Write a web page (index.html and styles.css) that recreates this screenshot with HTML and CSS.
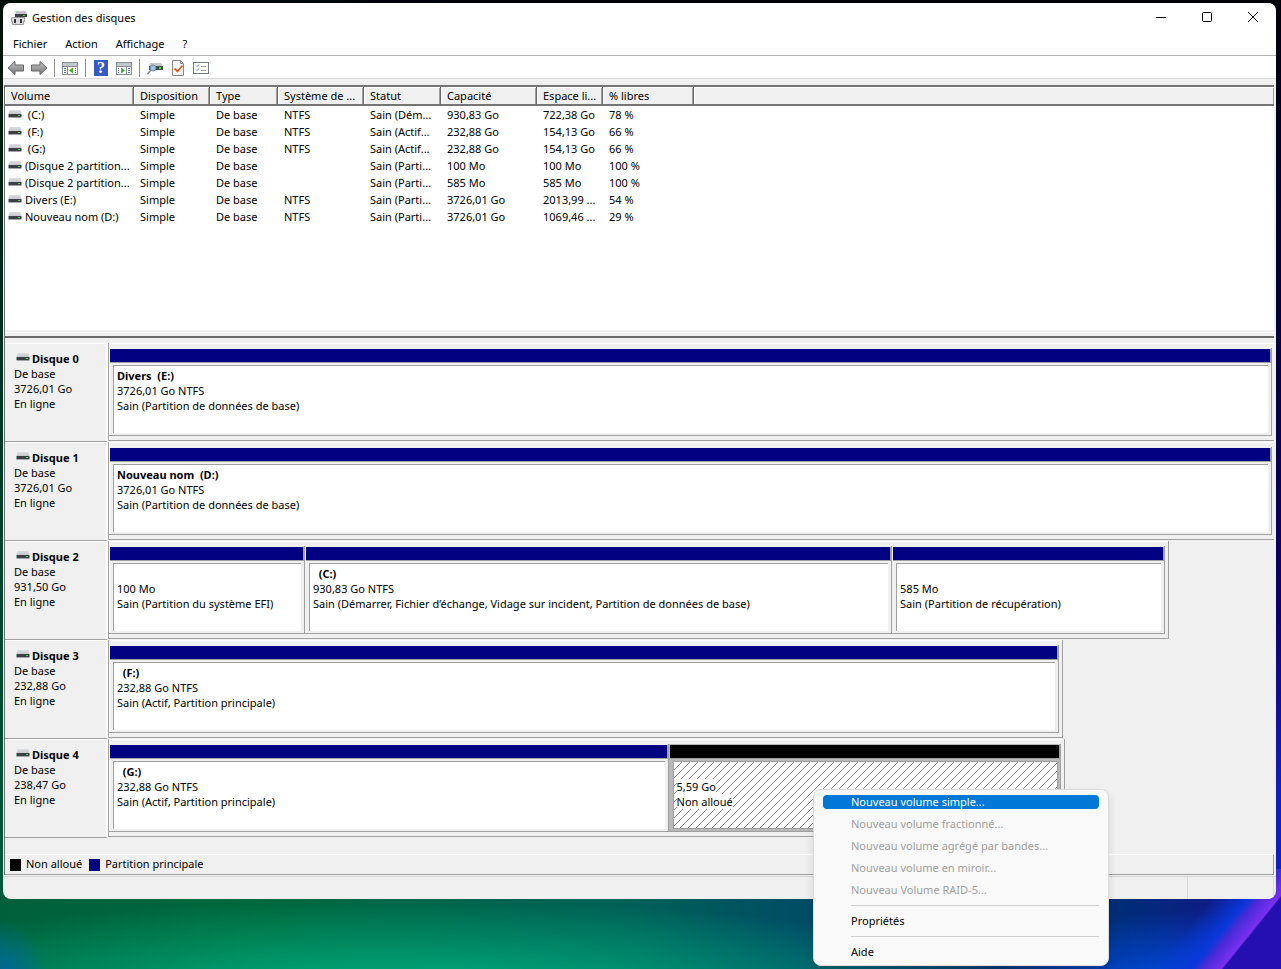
FILE: index.html
```
<!DOCTYPE html>
<html lang="fr">
<head>
  <meta charset="UTF-8" />
  <meta name="viewport" content="width=device-width, initial-scale=1.0" />
  <title>Gestion des disques</title>
  <link rel="stylesheet" href="styles.css">
</head>
<body>
  <svg class="sprite" aria-hidden="true">
    <defs>
      <linearGradient id="driveTop" x1="0" y1="0" x2="0" y2="1">
        <stop offset="0" stop-color="#dcdfe1" />
        <stop offset="1" stop-color="#c3c7ca" />
      </linearGradient>
      <linearGradient id="arrowFill" x1="0" y1="0" x2="0" y2="1">
        <stop offset="0" stop-color="#c4c4c4" />
        <stop offset="1" stop-color="#777" />
      </linearGradient>
      <symbol id="drive" viewBox="0 0 14 9">
        <path d="M1.500 0h11l1 4h-13z" fill="url(#driveTop)" />
        <rect x="0.500" y="4" width="13" height="3" fill="#3c4045" />
        <rect x="0.500" y="7" width="13" height="1" fill="#a4a8ac" />
        <rect x="10" y="5" width="2" height="1" fill="#3ee04a" />
      </symbol>
    </defs>
  </svg>

  <div class="window">
    <header class="titlebar">
      <svg class="app-icon" viewBox="0 0 16 16">
        <path d="M5 1h10l1 3H4z" fill="#c3c6c9" />
        <rect x="4" y="4" width="12" height="3" fill="#3c4045" />
        <rect x="12" y="5" width="2" height="1" fill="#3ee04a" />
        <path d="M0.500 7.500h13v4h-1v3h-11v-3h-1z" fill="#dcdcdc" stroke="#9a9a9a" />
        <path d="M3 9h2v4H3zM9 9h2v4H9z" fill="#333" />
      </svg>
      <h1>Gestion des disques</h1>
      <div class="win-buttons">
        <button type="button" aria-label="Réduire"><svg viewBox="0 0 12 12"><path d="M1 6.500h10" /></svg></button>
        <button type="button" aria-label="Agrandir"><svg viewBox="0 0 12 12"><rect x="1.500" y="1.500" width="9" height="9" rx="1" /></svg></button>
        <button type="button" aria-label="Fermer"><svg viewBox="0 0 12 12"><path d="M1 1l10 10M11 1L1 11" /></svg></button>
      </div>
    </header>

    <nav class="menubar">
      <button type="button">Fichier</button>
      <button type="button">Action</button>
      <button type="button">Affichage</button>
      <button type="button">?</button>
    </nav>

    <div class="toolbar">
      <button type="button" aria-label="Précédent"><svg viewBox="0 0 18 16"><path d="M1 8l7-6.500V5h8.500v6H8v3.500z" fill="url(#arrowFill)" stroke="#666" /></svg></button>
      <button type="button" aria-label="Suivant"><svg viewBox="0 0 18 16"><path d="M17 8l-7-6.500V5H1.500v6H10v3.500z" fill="url(#arrowFill)" stroke="#666" /></svg></button>
      <span class="sep"></span>
      <button type="button" aria-label="Afficher l'arborescence"><svg viewBox="0 0 18 16"><rect x="1.500" y="2.500" width="15" height="12" fill="#fff" stroke="#858b92" /><path d="M2 3h14v3H2z" fill="#c3c8cd" /><path d="M1.500 6.500h15M6.500 6.500v8" stroke="#858b92" /><path d="M3 8.500h2M3 10.500h2M3 12.500h2M14 8.500h1M14 10.500h1M14 12.500h1" stroke="#4b78b5" /><path d="M12 7.500v6L8 10.500z" fill="#45ad2c" /></svg></button>
      <span class="sep"></span>
      <button type="button" class="help" aria-label="Aide"><span>?</span></button>
      <button type="button" aria-label="Afficher le volet"><svg viewBox="0 0 18 16"><rect x="1.500" y="2.500" width="15" height="12" fill="#fff" stroke="#858b92" /><path d="M2 3h14v3H2z" fill="#c3c8cd" /><path d="M1.500 6.500h15M11.500 6.500v8" stroke="#858b92" /><path d="M13 8.500h2M13 10.500h2M13 12.500h2M3 8.500h1M3 10.500h1M3 12.500h1" stroke="#4b78b5" /><path d="M6 7.500v6l4-3z" fill="#45ad2c" /></svg></button>
      <span class="sep"></span>
      <button type="button" aria-label="Analyser les disques"><svg viewBox="0 0 18 16"><path d="M4 3h11l2 3H3z" fill="#c5c9cc" /><rect x="3" y="6" width="14" height="4" fill="#41464b" /><rect x="13" y="7" width="2" height="2" fill="#3ee04a" /><circle cx="7" cy="8" r="3" fill="#9dc4de" stroke="#688ba5" /><path d="M5 10l-3.500 4" stroke="#7b8b98" stroke-width="1.500" /></svg></button>
      <button type="button" aria-label="Propriétés"><svg viewBox="0 0 18 16"><path d="M3.500 0.500h8l3 3v12h-11z" fill="#fff" stroke="#888" /><path d="M11.500 0.500v3h3" fill="none" stroke="#888" /><path d="M5.500 8.500l3 3 5-6" fill="none" stroke="#e8591c" stroke-width="1.800" /></svg></button>
      <button type="button" aria-label="Paramètres"><svg viewBox="0 0 18 16"><rect x="1.500" y="2.500" width="15" height="11" fill="#fff" stroke="#6f7780" /><path d="M4 5.500l1 1 2-2M4 9.500l1 1 2-2" fill="none" stroke="#2c8be0" /><path d="M9 6.500h5M9 10.500h5" stroke="#9aa0a6" /></svg></button>
    </div>

    <div class="content">
      <div class="volume-pane">
        <table id="volumeTable">
          <colgroup>
            <col class="c-volume"><col class="c-layout"><col class="c-type"><col class="c-fs"><col class="c-status"><col class="c-capacity"><col class="c-free"><col class="c-percent"><col>
          </colgroup>
          <thead>
            <tr>
              <th>Volume</th>
              <th>Disposition</th>
              <th>Type</th>
              <th>Système de ...</th>
              <th>Statut</th>
              <th>Capacité</th>
              <th>Espace li...</th>
              <th>% libres</th>
              <th></th>
            </tr>
          </thead>
          <tbody></tbody>
        </table>
      </div>

      <div class="disk-pane" id="diskPane"></div>

      <div class="legend">
        <span class="swatch"></span><span class="label">Non alloué</span>
        <span class="swatch primary"></span><span class="label">Partition principale</span>
      </div>
    </div>

    <footer class="statusbar"><span></span><span></span></footer>
  </div>

  <div class="context-menu" role="menu">
    <button type="button" role="menuitem" class="active">Nouveau volume simple...</button>
    <button type="button" role="menuitem" disabled>Nouveau volume fractionné...</button>
    <button type="button" role="menuitem" disabled>Nouveau volume agrégé par bandes...</button>
    <button type="button" role="menuitem" disabled>Nouveau volume en miroir...</button>
    <button type="button" role="menuitem" disabled>Nouveau Volume RAID-5...</button>
    <hr>
    <button type="button" role="menuitem">Propriétés</button>
    <hr>
    <button type="button" role="menuitem">Aide</button>
  </div>

  <script src="script.js"></script>
</body>
</html>
```
FILE: styles.css
```
* {
  box-sizing: border-box;
}
body {
  margin: 0;
  padding: 3px 5px 70px 3px;
  min-height: 100vh;
  position: relative;
  overflow: hidden;
  font: 11px/15px "Noto Sans", sans-serif;
  color: #000;
  background:
    linear-gradient(129deg, transparent 45%, #0838d8 61%, #4a2ad8 66%, #7a30f0 74%, #2410b0 75%) right bottom / 150px 100px no-repeat,
    radial-gradient(ellipse 200px 80px at 1190px 990px, #0050f0, transparent) no-repeat,
    linear-gradient(90deg, #001008, #000008 40%) left top / 100% 4px no-repeat,
    linear-gradient(#00000c, #04003c 40%, #10006a 70%, #1020c0 90%) right top / 10px 880px no-repeat,
    linear-gradient(#001008, #003c28 50%, #005a3c) left top / 10px 900px no-repeat,
    radial-gradient(ellipse 50px 70px at 0 990px, #0060b0, transparent) no-repeat,
    radial-gradient(ellipse 620px 90px at 400px 990px, #00b080, transparent) no-repeat,
    linear-gradient(90deg, #00603c, #00683c 20%, #006058 50%, #004868 66%, #002c78 88%, #1a1090);
}
button {
  font: inherit;
  color: inherit;
  border: 0;
  padding: 0;
  background: none;
}
.sprite {
  position: absolute;
  width: 0;
  height: 0;
}
.window {
  background: #f0f0f0;
  border-radius: 8px;
  overflow: hidden;
}

/* title, menu and tool bars */
.titlebar {
  display: flex;
  align-items: center;
  height: 30px;
  padding-left: 8px;
  background: #fff;
}
.titlebar h1 {
  flex: 1;
  margin: 0 0 2px 5px;
  font-size: 11px;
  font-weight: normal;
}
.app-icon {
  width: 16px;
  height: 16px;
}
.win-buttons {
  display: flex;
}
.win-buttons button {
  width: 46px;
  height: 28px;
}
.win-buttons svg {
  width: 12px;
  height: 12px;
  fill: none;
  stroke: #000;
}
.menubar {
  display: flex;
  gap: 18px;
  height: 23px;
  padding: 0 0 2px 10px;
  background: #fff;
  border-bottom: 1px solid #b4b4b4;
}
.toolbar {
  display: flex;
  align-items: center;
  gap: 5px;
  height: 23px;
  padding: 2px 0 0 4px;
  background: #fff;
  border-bottom: 1px solid #dcdcdc;
}
.toolbar button,
.toolbar svg {
  display: block;
  width: 18px;
  height: 16px;
}
.toolbar .sep {
  width: 1px;
  height: 18px;
  margin: 0 1px;
  background: #8c8c8c;
}
.toolbar .help span {
  display: block;
  width: 14px;
  margin: 0 auto;
  font: bold 16px/16px "Liberation Serif", serif;
  color: #fff;
  background: #3659c4;
}

/* volume list */
.content {
  margin: 6px 2px 0 1px;
  border-left: 1px solid #696969;
}
.volume-pane {
  height: 253px;
  background: #fff;
  border-top: 2px solid #757575;
  border-bottom: 2px solid #696969;
  box-shadow: inset 0 -3px #f0f0f0, inset 0 -4px #fff, inset 0 -6px #f0f0f0;
}
table {
  width: 100%;
  table-layout: fixed;
  border-collapse: separate;
  border-spacing: 0;
}
.c-volume { width: 129px; }
.c-layout { width: 76px; }
.c-type { width: 68px; }
.c-fs { width: 86px; }
.c-status { width: 77px; }
.c-capacity { width: 96px; }
.c-free { width: 66px; }
.c-percent { width: 91px; }
th, td {
  padding: 0 0 0 6px;
  font-weight: normal;
  text-align: left;
  white-space: pre;
}
th {
  height: 19px;
  background: #f0f0f0;
  border-right: 1px solid #696969;
  border-bottom: 2px solid #757575;
  box-shadow: inset 1px 1px #fff, inset -1px 0 #a0a0a0;
}
th:last-child {
  border-right: 0;
}
td {
  height: 17px;
  line-height: 17px;
}
td:first-child {
  padding-left: 3px;
}
.drive {
  width: 14px;
  height: 9px;
  margin-right: 3px;
}

/* graphical view */
.disk-pane {
  padding: 5px 0 16px;
}
.disk {
  display: flex;
  height: 99px;
}
.disk-info {
  flex: none;
  width: 103px;
  padding: 7px 0 0 9px;
  border-top: 1px solid #fff;
  border-right: 2px solid #fff;
  border-bottom: 1px solid #a0a0a0;
}
.disk-info .drive {
  margin: 0 2px 1px;
}
.disk-info p,
.body p {
  margin: 0;
  height: 15px;
  white-space: pre;
}
.disk-info strong,
.body strong {
  font-weight: bold;
}
.track {
  flex: 1;
  min-width: 0;
}
.partitions {
  display: flex;
  height: 98px;
  padding: 5px 3px 4px 0;
  border: solid #a0a0a0;
  border-width: 0 1px 1px;
  box-shadow: inset 1px 1px #fff;
}
.full .partitions {
  padding-right: 2px;
  border-right: 0;
}
.partition {
  flex-basis: 0;
  min-width: 0;
  display: flex;
  flex-direction: column;
  border: solid #a0a0a0;
  border-width: 0 1px 1px 0;
  padding: 1px 0 2px 1px;
}
.partition .bar {
  height: 14px;
  background: #000080;
  border-bottom: 1px solid #a0a0a0;
  box-shadow: 1px 0 #a0a0a0;
  margin-right: 1px;
}
.partition .body {
  flex: 1;
  margin: 2px 3px 0 3px;
  padding: 2px 0 0 3px;
  overflow: hidden;
  background: #fff;
  border: solid #a0a0a0;
  border-width: 1px 0 0 1px;
}
.partition.free {
  background: #b8b8b8;
}
.free .bar {
  background: #000;
}
.free .body {
  margin-right: 2px;
  border-width: 1px;
  background: #fff linear-gradient(135deg, transparent 46%, #888 46% 54%, transparent 54%) 0 0 / 8px 8px;
}
.free .body span {
  display: inline-block;
  background: #fff;
}
.legend {
  display: flex;
  align-items: center;
  gap: 5px;
  height: 21px;
  padding-left: 5px;
  border-top: 1px solid #fff;
  border-right: 1px solid #a0a0a0;
  border-bottom: 1px solid #a0a0a0;
}
.legend .label {
  margin: 0 2px 2px 0;
}
.swatch {
  width: 11px;
  height: 12px;
  background: #000;
}
.swatch.primary {
  background: #000080;
}
.statusbar {
  display: flex;
  height: 23px;
  margin-top: 1px;
  padding-right: 2px;
  border-top: 1px solid #d7d7d7;
}
.statusbar span {
  width: 86px;
  border-right: 1px solid #d7d7d7;
}
.statusbar span:first-child {
  flex: 1;
}

/* popup menu of the free space */
.context-menu {
  position: absolute;
  left: 813px;
  top: 789px;
  width: 296px;
  padding: 1px 9px 0;
  background: #f9f9f9;
  border: 1px solid #dcdcdc;
  border-radius: 8px;
  box-shadow: 0 4px 8px rgba(0, 0, 0, 0.12);
}
.context-menu button {
  display: block;
  width: 100%;
  height: 14px;
  margin: 4px 0 8px;
  padding-left: 28px;
  line-height: 14px;
  text-align: left;
  border-radius: 4px;
}
.context-menu button:last-child {
  margin-bottom: 6px;
}
.context-menu button:disabled {
  color: #a0a0a0;
}
.context-menu .active {
  color: #fff;
  background: #0078d7;
}
.context-menu hr {
  margin: 0 0 8px 28px;
  border: 0;
  border-top: 1px solid #d0d0d0;
}
```
FILE: script.js
```
const volumes = [
  [' (C:)', 'Simple', 'De base', 'NTFS', 'Sain (Dém...', '930,83 Go', '722,38 Go', '78 %'],
  [' (F:)', 'Simple', 'De base', 'NTFS', 'Sain (Actif...', '232,88 Go', '154,13 Go', '66 %'],
  [' (G:)', 'Simple', 'De base', 'NTFS', 'Sain (Actif...', '232,88 Go', '154,13 Go', '66 %'],
  ['(Disque 2 partition...', 'Simple', 'De base', '', 'Sain (Parti...', '100 Mo', '100 Mo', '100 %'],
  ['(Disque 2 partition...', 'Simple', 'De base', '', 'Sain (Parti...', '585 Mo', '585 Mo', '100 %'],
  ['Divers (E:)', 'Simple', 'De base', 'NTFS', 'Sain (Parti...', '3726,01 Go', '2013,99 ...', '54 %'],
  ['Nouveau nom (D:)', 'Simple', 'De base', 'NTFS', 'Sain (Parti...', '3726,01 Go', '1069,46 ...', '29 %']
];

// width: share of the track in %, grow: relative size of a partition
const disks = [
  { size: '3726,01 Go', width: 100, parts: [
    { grow: 1, name: 'Divers  (E:)', size: '3726,01 Go NTFS', status: 'Sain (Partition de données de base)' }
  ] },
  { size: '3726,01 Go', width: 100, parts: [
    { grow: 1, name: 'Nouveau nom  (D:)', size: '3726,01 Go NTFS', status: 'Sain (Partition de données de base)' }
  ] },
  { size: '931,50 Go', width: 91, parts: [
    { grow: 194, name: '', size: '100 Mo', status: 'Sain (Partition du système EFI)' },
    { grow: 585, name: '  (C:)', size: '930,83 Go NTFS', status: 'Sain (Démarrer, Fichier d’échange, Vidage sur incident, Partition de données de base)' },
    { grow: 271, name: '', size: '585 Mo', status: 'Sain (Partition de récupération)' }
  ] },
  { size: '232,88 Go', width: 81.9, parts: [
    { grow: 1, name: '  (F:)', size: '232,88 Go NTFS', status: 'Sain (Actif, Partition principale)' }
  ] },
  { size: '238,47 Go', width: 82.1, parts: [
    { grow: 558, name: '  (G:)', size: '232,88 Go NTFS', status: 'Sain (Actif, Partition principale)' },
    { grow: 391, name: '', size: '5,59 Go', status: 'Non alloué', free: true }
  ] }
];

const driveIcon = '<svg class="drive"><use href="#drive" /></svg>';

function renderVolumes() {
  document.querySelector('#volumeTable tbody').innerHTML = volumes
    .map((row) => `<tr>${row.map((cell, i) => `<td>${i === 0 ? driveIcon : ''}${cell}</td>`).join('')}<td></td></tr>`)
    .join('');
}

function renderPartition(part) {
  return `
    <div class="partition ${part.free ? 'free' : ''}" style="flex-grow: ${part.grow}">
      <div class="bar"></div>
      <div class="body">
        <p><strong>${part.name}</strong></p>
        <p><span>${part.size}</span></p>
        <p><span>${part.status}</span></p>
      </div>
    </div>`;
}

function renderDisks() {
  document.getElementById('diskPane').innerHTML = disks
    .map((disk, i) => `
      <section class="disk ${disk.width === 100 ? 'full' : ''}">
        <div class="disk-info">
          <p>${driveIcon}<strong>Disque ${i}</strong></p>
          <p>De base</p>
          <p>${disk.size}</p>
          <p>En ligne</p>
        </div>
        <div class="track">
          <div class="partitions" style="width: ${disk.width}%">${disk.parts.map(renderPartition).join('')}</div>
        </div>
      </section>`)
    .join('');
}

renderVolumes();
renderDisks();
```
